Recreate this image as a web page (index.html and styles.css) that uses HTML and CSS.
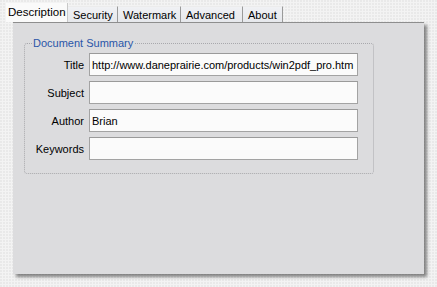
FILE: index.html
```html
<!DOCTYPE html>
<html lang="en">
<head>
    <meta charset="UTF-8">
    <title>Document Properties</title>
    <link rel="stylesheet" href="styles.css">
</head>
<body>
    <div class="dialog">
        <div class="tabs">
            <div class="tab active tab-description">Description</div>
            <div class="tab tab-security">Security</div>
            <div class="tab tab-watermark">Watermark</div>
            <div class="tab tab-advanced">Advanced</div>
            <div class="tab tab-about">About</div>
        </div>
        <div class="sheet">
            <fieldset class="summary">
                <legend>Document Summary</legend>
                <div class="field-row">
                    <label for="docTitle">Title</label>
                    <input type="text" id="docTitle" value="http://www.daneprairie.com/products/win2pdf_pro.htm">
                </div>
                <div class="field-row">
                    <label for="docSubject">Subject</label>
                    <input type="text" id="docSubject" value="">
                </div>
                <div class="field-row">
                    <label for="docAuthor">Author</label>
                    <input type="text" id="docAuthor" value="Brian">
                </div>
                <div class="field-row">
                    <label for="docKeywords">Keywords</label>
                    <input type="text" id="docKeywords" value="">
                </div>
            </fieldset>
        </div>
    </div>
</body>
</html>
```

FILE: styles.css
```css
:root {
    --page-bg: #f3f3f3;
    --sheet-bg: #dcdcde;
    --tab-bg: #e6e8ec;
    --border-dark: #8e8e8e;
    --legend-blue: #2a56a8;
    --text: #000;
}

html, body { margin: 0; padding: 0; }

body {
    background-color: var(--page-bg);
    background-image: radial-gradient(circle at 1px 1px, rgba(0, 0, 0, 0.04) 1px, transparent 0);
    background-size: 3px 3px;
    font-family: "Liberation Sans", Arial, sans-serif;
    font-size: 11px;
    color: var(--text);
    width: 437px;
    height: 287px;
    overflow: hidden;
}

.dialog { padding: 3px 0 0 6px; }

/* Tab strip */
.tabs { display: flex; height: 19px; align-items: flex-end; }
.tab {
    flex: none; box-sizing: border-box;
    height: 16px; line-height: 16px; padding: 0 0 0 5px;
    background: linear-gradient(to bottom, #f0f1f4, var(--tab-bg));
    border-right: 1px solid #9a9a9a;
    border-top: 1px solid #ececec;
    white-space: nowrap;
}
.tab.active {
    height: 19px; line-height: 18px;
    background: #fafafa; border-top: none; border-right: 1px solid #c8c8c8;
    padding-left: 2px; font-size: 11.5px;
}
.tab-description { width: 62px; }
.tab-security { width: 50px; }
.tab-watermark { width: 63px; }
.tab-advanced { width: 62px; }
.tab-about { width: 40px; }

/* Page body */
.sheet {
    margin-left: 7px; width: 411px; height: 252px;
    background-color: var(--sheet-bg);
    border-top: 1px solid var(--border-dark);
    box-shadow: 3px 3px 3px rgba(0, 0, 0, 0.45);
    padding: 14px 0 0 11px;
    box-sizing: border-box;
}

.summary {
    margin: 0; width: 350px; height: 137px; box-sizing: border-box;
    border: 1px dotted #a8a8ac; border-radius: 3px;
    padding: 4px 14px 0 0;
    display: flex; flex-direction: column; gap: 5px;
}
.summary legend {
    color: var(--legend-blue); padding: 0 1px; margin-left: 7px;
    font-size: 11px;
}

.field-row { display: flex; align-items: center; }
.field-row label { width: 59px; text-align: right; padding-right: 5px; }
.field-row input {
    width: 269px; height: 23px; box-sizing: border-box;
    border: 1px solid #a3a3a3; border-top-color: #9a9a9a;
    background: #fbfbfb; padding: 0 1px 0 2px; margin: 0;
    font-family: "Liberation Sans", Arial, sans-serif; font-size: 11px; color: var(--text);
    letter-spacing: -0.02px;
}
```
